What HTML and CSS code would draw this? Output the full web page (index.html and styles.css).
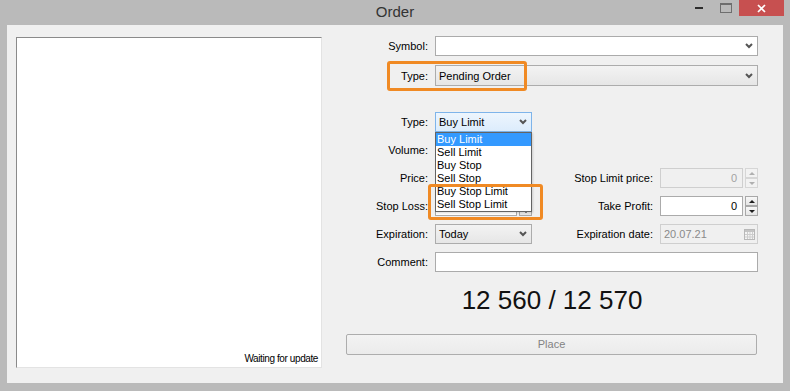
FILE: index.html
```html
<!DOCTYPE html>
<html lang="en">
<head>
  <meta charset="UTF-8">
  <title>Order</title>
  <link rel="stylesheet" href="styles.css">
</head>
<body>

<div class="window">
  <div class="titlebar">
    <span></span>
    <span class="title">Order</span>
    <div class="controls">
      <span class="ctl min"></span>
      <span class="ctl max"></span>
      <span class="ctl close">
        <svg width="9" height="9" viewBox="0 0 9 9"><path d="M1 1L8 8M8 1L1 8" stroke="#fff" stroke-width="1.7"/></svg>
      </span>
    </div>
  </div>

  <div class="client">
    <div class="chart"><span class="status">Waiting for update</span></div>

    <div class="order">
      <div class="rows-top">
        <span class="lbl">Symbol:</span>
        <div class="box combo">
          <span></span>
          <svg class="chev" width="8" height="6" viewBox="0 0 8 6"><path d="M1 1L4 4L7 1" fill="none" stroke="#555" stroke-width="2"/></svg>
        </div>
        <span class="lbl">Type:</span>
        <div class="box combo select">
          <span>Pending Order</span>
          <svg class="chev" width="8" height="6" viewBox="0 0 8 6"><path d="M1 1L4 4L7 1" fill="none" stroke="#555" stroke-width="2"/></svg>
        </div>
      </div>

      <div class="params">
        <span class="lbl">Type:</span>
        <div class="cell">
          <div class="box combo select focus">
            <span>Buy Limit</span>
            <svg class="chev" width="8" height="6" viewBox="0 0 8 6"><path d="M1 1L4 4L7 1" fill="none" stroke="#555" stroke-width="2"/></svg>
          </div>
          <div class="dropdown">
            <div class="sel">Buy Limit</div>
            <div>Sell Limit</div>
            <div>Buy Stop</div>
            <div>Sell Stop</div>
            <div>Buy Stop Limit</div>
            <div>Sell Stop Limit</div>
          </div>
        </div>
        <span></span><span></span>

        <span class="lbl">Volume:</span>
        <div class="spin"><div class="box"></div><div class="arrows"><span class="up"></span><span class="down"></span></div></div>
        <span></span><span></span>

        <span class="lbl">Price:</span>
        <div class="spin"><div class="box"></div><div class="arrows"><span class="up"></span><span class="down"></span></div></div>
        <span class="lbl">Stop Limit price:</span>
        <div class="spin off"><div class="box">0</div><div class="arrows"><span class="up"></span><span class="down"></span></div></div>

        <span class="lbl">Stop Loss:</span>
        <div class="spin"><div class="box"></div><div class="arrows"><span class="up"></span><span class="down"></span></div></div>
        <span class="lbl">Take Profit:</span>
        <div class="spin"><div class="box">0</div><div class="arrows"><span class="up"></span><span class="down"></span></div></div>

        <span class="lbl">Expiration:</span>
        <div class="box combo select">
          <span>Today</span>
          <svg class="chev" width="8" height="6" viewBox="0 0 8 6"><path d="M1 1L4 4L7 1" fill="none" stroke="#555" stroke-width="2"/></svg>
        </div>
        <span class="lbl">Expiration date:</span>
        <div class="box combo date">
          <span>20.07.21</span>
          <svg width="11" height="11" viewBox="0 0 11 11">
            <rect x="0.5" y="0.5" width="10" height="10" fill="#f4f4f4" stroke="#b8b8b8"/>
            <rect x="1" y="1" width="9" height="2" fill="#c4c4c4"/>
            <path d="M1 5.5H10M1 8H10M3.5 3V10M6 3V10M8.5 3V10" stroke="#cdcdcd" stroke-width="1"/>
          </svg>
        </div>

        <span class="lbl">Comment:</span>
        <div class="box wide"></div>
      </div>

      <div class="quote">12 560 / 12 570</div>
      <div class="place">Place</div>

      <span class="mark m1"></span>
      <span class="mark m2"></span>
    </div>
  </div>
</div>

</body>
</html>
```

FILE: styles.css
```css
* { box-sizing: border-box; margin: 0; padding: 0; }
body {
  width: 790px; height: 391px; overflow: hidden;
  background: #bababa;
  font-family: "Liberation Sans", Arial, sans-serif;
  font-size: 11px;
  color: #000;
}

.window {
  height: 391px;
  display: flex;
  flex-direction: column;
  padding: 0 7px 8px;
}

/* title bar */
.titlebar {
  height: 25px;
  margin: 0 -7px;
  display: grid;
  grid-template-columns: 1fr auto 1fr;
  align-items: start;
}
.title { font-size: 15px; line-height: 24px; color: #333; }
.controls { justify-self: end; display: flex; margin-right: 6px; }
.ctl { width: 26px; height: 16px; display: flex; justify-content: center; }
.ctl.min::before { content: ""; width: 8px; height: 2px; background: #2e2e2e; margin-top: 7px; }
.ctl.max { width: 27px; }
.ctl.max::before { content: ""; width: 10px; height: 7px; border: 1px solid #6e6e6e; border-top-width: 2px; margin-top: 3px; }
.ctl.close { width: 45px; background: #c75050; align-items: center; }

/* client area */
.client {
  flex: 1;
  background: #f0f0f0;
  display: flex;
  align-items: flex-start;
  padding: 12px 0 0 9px;
}
.chart {
  width: 306px; height: 331px;
  background: #fff;
  border: 1px solid;
  border-color: #8a8a8a #e3e3e3 #e3e3e3 #8a8a8a;
  display: flex;
  align-items: flex-end;
  justify-content: flex-end;
  padding: 0 3px 3px;
}
.status { font-size: 10px; letter-spacing: -0.4px; }

.order { position: relative; width: 412px; margin: -1px 0 0 24px; }

.rows-top {
  display: grid;
  grid-template-columns: 82px 1fr;
  grid-template-rows: 20px 21px;
  column-gap: 7px;
  row-gap: 9px;
}
.params {
  display: grid;
  grid-template-columns: 82px 97px 1fr 98px;
  grid-auto-rows: 20px;
  column-gap: 7px;
  row-gap: 8px;
  margin-top: 26px;
}
.lbl { text-align: right; align-self: center; white-space: nowrap; }

/* fields */
.box {
  background: #fff;
  border: 1px solid #ababab;
  display: flex;
  align-items: center;
  padding: 0 3px;
  white-space: nowrap;
}
.combo { justify-content: space-between; padding-right: 4px; }
.select { background: linear-gradient(#f3f3f3, #e6e6e6); border-color: #acacac; }
.select.focus { background: linear-gradient(#edf5fd, #dcecfc); border-color: #7eb4ea; }
.date { background: #f0f0f0; border-color: #cfcfcf; color: #8a8a8a; padding-right: 2px; }
.wide { grid-column: 2 / 5; }

.cell { position: relative; z-index: 3; display: flex; flex-direction: column; }
.cell > .box { flex: 1; }
.dropdown {
  position: absolute;
  top: 20px; left: 0;
  width: 100%;
  background: #fff;
  border: 1px solid #646464;
  box-shadow: 1px 1px 2px rgba(0,0,0,0.15);
}
.dropdown div { height: 13px; line-height: 13px; padding-left: 1px; }
.dropdown .sel { background: #3399ff; color: #fff; }

/* spin edits */
.spin { display: flex; gap: 2px; }
.spin .box { flex: 1; justify-content: flex-end; padding-right: 5px; }
.arrows { width: 13px; display: flex; flex-direction: column; }
.arrows span {
  flex: 1;
  border: 1px solid #a8a8a8;
  background: linear-gradient(#f8f8f8, #e5e5e5);
  display: flex;
  align-items: center;
  justify-content: center;
}
.arrows span::before {
  content: "";
  border-left: 3px solid transparent;
  border-right: 3px solid transparent;
  border-bottom: 3px solid #1e1e1e;
}
.arrows .down::before { border-bottom: 0; border-top: 3px solid #1e1e1e; }
.spin.off .box { background: #f0f0f0; border-color: #cfcfcf; color: #a3a3a3; }
.spin.off .arrows span { border-color: #d6d6d6; background: #f2f2f2; }
.spin.off .arrows .up::before { border-bottom-color: #b0b0b0; }
.spin.off .arrows .down::before { border-top-color: #b0b0b0; }

.quote {
  margin-top: 13px;
  text-align: center;
  font-size: 26px;
  line-height: 30px;
  color: #111;
}
.place {
  margin-top: 19px;
  width: 411px; height: 21px;
  border: 1px solid #adadad;
  border-radius: 2px;
  background: linear-gradient(#f3f3f3, #ebebeb);
  color: #838383;
  text-align: center;
  line-height: 19px;
}

/* orange highlight frames */
.mark {
  position: absolute;
  z-index: 5;
  border: 3px solid #f08a24;
  border-radius: 3px;
}
.m1 { left: 41px; top: 25px; width: 140px; height: 30px; }
.m2 { left: 82px; top: 148px; width: 115px; height: 36px; }
```
